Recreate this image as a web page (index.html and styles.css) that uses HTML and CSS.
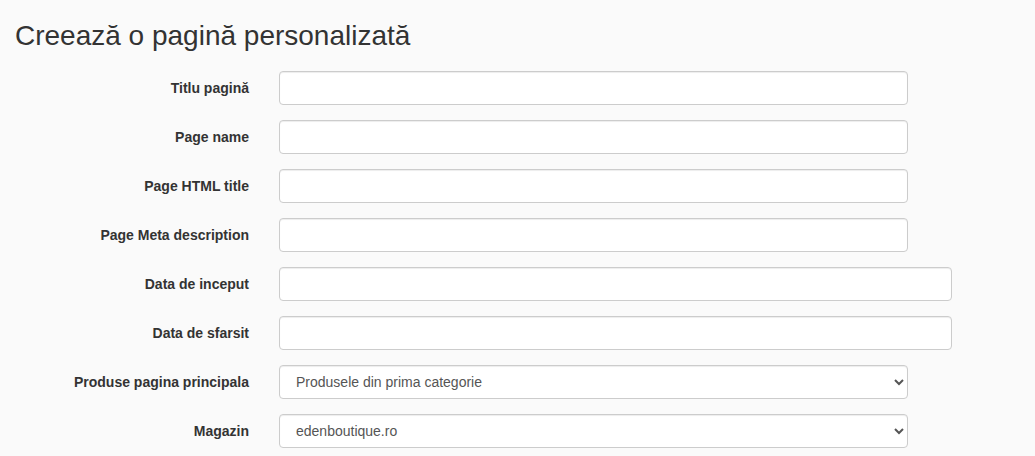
FILE: index.html
```html
<!DOCTYPE html>
<html lang="ro">
<head>
    <meta charset="UTF-8">
    <meta name="viewport" content="width=device-width, initial-scale=1.0">
    <title>Creează o pagină personalizată</title>
    <link rel="stylesheet" href="styles.css">
</head>
<body>

<div class="container">
    <h1>Creează o pagină personalizată</h1>

    <form class="form-horizontal">
        <div class="form-group">
            <label for="title">Titlu pagină</label>
            <div class="field"><input type="text" id="title"></div>
        </div>
        <div class="form-group">
            <label for="name">Page name</label>
            <div class="field"><input type="text" id="name"></div>
        </div>
        <div class="form-group">
            <label for="htmlTitle">Page HTML title</label>
            <div class="field"><input type="text" id="htmlTitle"></div>
        </div>
        <div class="form-group">
            <label for="metaDesc">Page Meta description</label>
            <div class="field"><input type="text" id="metaDesc"></div>
        </div>
        <div class="form-group">
            <label for="startDate">Data de inceput</label>
            <div class="field wide"><input type="text" id="startDate"></div>
        </div>
        <div class="form-group">
            <label for="endDate">Data de sfarsit</label>
            <div class="field wide"><input type="text" id="endDate"></div>
        </div>
        <div class="form-group">
            <label for="products">Produse pagina principala</label>
            <div class="field">
                <select id="products">
                    <option>Produsele din prima categorie</option>
                </select>
            </div>
        </div>
        <div class="form-group">
            <label for="shop">Magazin</label>
            <div class="field">
                <select id="shop">
                    <option>edenboutique.ro</option>
                </select>
            </div>
        </div>
    </form>
</div>

</body>
</html>
```

FILE: styles.css
```css
body {
    font-family: 'Liberation Sans', Arial, sans-serif;
    font-size: 14px;
    line-height: 1.42857;
    background-color: #fafafa;
    color: #333;
    margin: 0;
}
.container {
    padding: 0 15px;
}
h1 {
    font-size: 28px;
    font-weight: normal;
    line-height: 1.1;
    margin: 21px 0 19px;
}
.form-group {
    display: flex;
    margin-bottom: 15px;
}
.form-group label {
    width: 234px;
    padding-top: 8px;
    padding-right: 15px;
    text-align: right;
    font-weight: bold;
    flex-shrink: 0;
}
.field {
    padding-left: 15px;
    width: 629px;
}
.field.wide {
    width: 673px;
}
input, select {
    display: block;
    box-sizing: border-box;
    width: 100%;
    height: 34px;
    padding: 6px 12px;
    font-family: inherit;
    font-size: 14px;
    color: #555;
    background-color: #fff;
    border: 1px solid #ccc;
    border-radius: 4px;
    box-shadow: inset 0 1px 1px rgba(0, 0, 0, 0.075);
}
```
